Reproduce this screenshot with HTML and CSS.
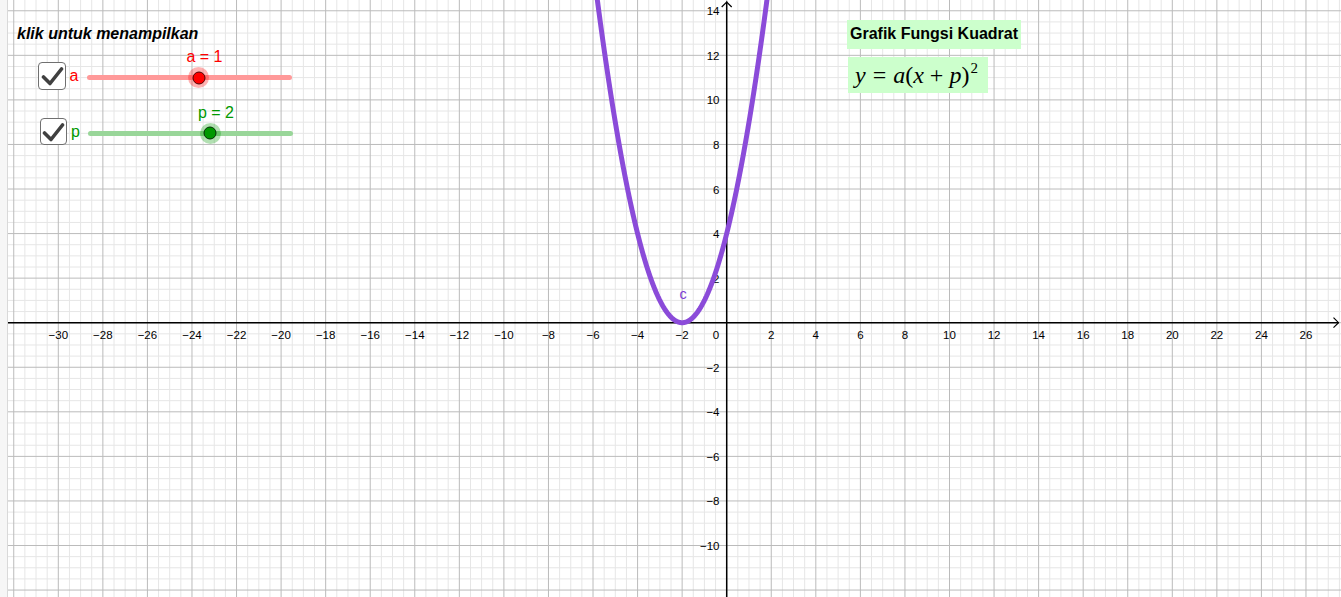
FILE: index.html
```html
<!DOCTYPE html>
<html lang="id">
<head>
<meta charset="utf-8">
<title>Grafik Fungsi Kuadrat</title>
<link rel="stylesheet" href="styles.css">
</head>
<body>
<div class="applet">
  <svg class="graph" id="graph" width="1341" height="597" viewBox="0 0 1341 597" xmlns="http://www.w3.org/2000/svg"></svg>

  <div class="caption">klik untuk menampilkan</div>

  <div class="slider slider-a">
    <div class="check"><svg width="24" height="24" viewBox="0 0 24 24"><path d="M3.5 13 L10 19.5 L21.5 5"/></svg></div>
    <span class="var">a</span>
    <div class="track">
      <span class="value" style="left:118px">a = 1</span>
      <span class="knob" style="left:112px"></span>
    </div>
  </div>

  <div class="slider slider-p">
    <div class="check"><svg width="24" height="24" viewBox="0 0 24 24"><path d="M3.5 13 L10 19.5 L21.5 5"/></svg></div>
    <span class="var">p</span>
    <div class="track">
      <span class="value" style="left:128px">p = 2</span>
      <span class="knob" style="left:122px"></span>
    </div>
  </div>

  <div class="title-box">Grafik Fungsi Kuadrat</div>

  <div class="formula-box">
    <span class="mi">y</span><span class="rel">=</span><span class="mi">a</span><span class="mo">(</span><span class="mi">x</span><span class="bin">+</span><span class="mi">p</span><span class="mo">)</span><sup class="sup">2</sup>
  </div>
</div>
<script src="script.js"></script>
</body>
</html>
```

FILE: styles.css
```css
* { box-sizing: border-box; }

body {
  margin: 0;
  background: #ffffff;
  font-family: "Liberation Sans", Arial, sans-serif;
}

.applet {
  position: relative;
  width: 1341px;
  height: 597px;
  overflow: hidden;
  background: #ffffff;
}

.graph {
  position: absolute;
  left: 0;
  top: 0;
  display: block;
}

.graph .axis-label {
  font-family: "Liberation Sans", Arial, sans-serif;
  font-size: 11.5px;
  fill: #000;
}

.graph .curve-label {
  font-family: "Liberation Sans", Arial, sans-serif;
  font-size: 14.5px;
  fill: #7e3fd6;
}

.caption {
  position: absolute;
  left: 17px;
  top: 24px;
  font-style: italic;
  font-weight: bold;
  font-size: 16px;
  line-height: 20px;
  color: #000;
}

.slider {
  position: absolute;
  display: flex;
  align-items: center;
  height: 28px;
}

.slider-a { left: 38px; top: 62px; }
.slider-p { left: 39.5px; top: 117.5px; }

.check {
  width: 27.5px;
  height: 27.5px;
  border: 1.5px solid #707070;
  border-radius: 4px;
  background: #fff;
  display: flex;
  align-items: center;
  justify-content: center;
}

.check svg path {
  fill: none;
  stroke: #404040;
  stroke-width: 3.6;
  stroke-linecap: round;
  stroke-linejoin: round;
}

.var {
  width: 21px;
  padding-left: 4px;
  font-size: 16px;
  line-height: 20px;
}

.slider-a .var { color: #ff0000; }
.slider-p .var { color: #009900; }

.track {
  position: relative;
  width: 205px;
  height: 5px;
  margin-top: 3px;
  border-radius: 3px;
}

.slider-a .track { background: #ff9999; }
.slider-p .track { background: #99d699; }

.knob {
  position: absolute;
  top: 50%;
  width: 13px;
  height: 13px;
  border-radius: 50%;
  border: 1px solid #000;
  transform: translate(-50%, -50%);
}

.knob::before {
  content: "";
  position: absolute;
  left: 50%;
  top: 50%;
  width: 21px;
  height: 21px;
  border-radius: 50%;
  transform: translate(-50%, -50%);
  z-index: -1;
}

.slider-a .knob { background: #ff0000; }
.slider-a .knob::before { background: rgba(255, 0, 0, 0.3); }
.slider-p .knob { background: #009900; }
.slider-p .knob::before { background: rgba(0, 153, 0, 0.3); }

.value {
  position: absolute;
  top: -27px;
  transform: translateX(-50%);
  font-size: 16px;
  line-height: 18px;
  white-space: nowrap;
}

.slider-a .value { color: #ff0000; }
.slider-p .value { color: #009900; }

.title-box {
  position: absolute;
  left: 847px;
  top: 20px;
  width: 174px;
  height: 29px;
  padding-left: 3px;
  background: #ccffcc;
  font-weight: bold;
  font-size: 16px;
  line-height: 27px;
  color: #000;
  white-space: nowrap;
}

.formula-box {
  position: absolute;
  left: 848px;
  top: 57px;
  width: 140px;
  height: 36px;
  padding-left: 7px;
  background: #ccffcc;
  font-family: "Liberation Serif", "Times New Roman", serif;
  font-size: 24px;
  line-height: 36px;
  color: #000;
  white-space: nowrap;
}

.formula-box .mi { font-style: italic; }
.formula-box .rel { margin: 0 7px; }
.formula-box .bin { margin: 0 6px; }
.formula-box .sup {
  font-size: 15px;
  vertical-align: 10px;
  line-height: 0;
  margin-left: 1px;
}
```

FILE: script.js
```js
(function () {
  var NS = "http://www.w3.org/2000/svg";
  var svg = document.getElementById("graph");
  var W = 1341, H = 597;
  var x0 = 726.7, y0 = 322.7, u = 22.28;
  var L = 8;

  function el(tag, attrs, parent) {
    var e = document.createElementNS(NS, tag);
    for (var k in attrs) e.setAttribute(k, attrs[k]);
    (parent || svg).appendChild(e);
    return e;
  }

  // left frame strip
  el("rect", { x: 0, y: 0, width: 7, height: H, fill: "#f6f6f6" });
  el("line", { x1: 7.5, y1: 0, x2: 7.5, y2: H, stroke: "#d9d9d9", "stroke-width": 1 });

  var minor = el("g", { stroke: "#e6e6e6", "stroke-width": 1 });
  var major = el("g", { stroke: "#bbbbbb", "stroke-width": 1 });
  var step = u / 2;

  var kx0 = Math.ceil((L - x0) / step), kx1 = Math.floor((W - x0) / step);
  for (var k = kx0; k <= kx1; k++) {
    var x = x0 + k * step;
    el("line", { x1: x, y1: 0, x2: x, y2: H }, (k % 4 === 0) ? major : minor);
  }
  var ky0 = Math.ceil((0 - y0) / step), ky1 = Math.floor((H - y0) / step);
  for (var j = ky0; j <= ky1; j++) {
    var y = y0 + j * step;
    el("line", { x1: L, y1: y, x2: W, y2: y }, (j % 4 === 0) ? major : minor);
  }

  // axes
  var axes = el("g", { stroke: "#000", "stroke-width": 1.5, fill: "none" });
  el("line", { x1: L, y1: y0, x2: 1338.5, y2: y0 }, axes);
  el("line", { x1: x0, y1: 1.5, x2: x0, y2: H }, axes);
  el("polyline", { points: "1333.5,317.7 1338.5,322.7 1333.5,327.7", "stroke-width": 1.2 }, axes);
  el("polyline", { points: (x0 - 5) + ",7 " + x0 + ",2 " + (x0 + 5) + ",7", "stroke-width": 1.2 }, axes);

  // labels
  var labels = el("g", {});
  function fmt(n) { return n < 0 ? "\u2212" + (-n) : String(n); }
  for (var n = -30; n <= 26; n += 2) {
    if (n === 0) continue;
    var t = el("text", { x: x0 + n * u, y: 338.5, "text-anchor": "middle", "class": "axis-label" }, labels);
    t.textContent = fmt(n);
  }
  var zero = el("text", { x: 716, y: 338.5, "text-anchor": "middle", "class": "axis-label" }, labels);
  zero.textContent = "0";
  for (var m = -10; m <= 14; m += 2) {
    if (m === 0) continue;
    var ty = el("text", { x: 719.5, y: y0 - m * u + 4.5, "text-anchor": "end", "class": "axis-label" }, labels);
    ty.textContent = fmt(m);
  }

  // curve y = a(x + p)^2, a = 1, p = 2
  var a = 1, p = 2;
  var d = "";
  var first = true;
  for (var xv = -6.2; xv <= 2.2; xv += 0.01) {
    var yv = a * (xv + p) * (xv + p);
    var px = x0 + xv * u, py = y0 - yv * u;
    if (py < -10) { first = true; continue; }
    d += (first ? "M" : "L") + px.toFixed(2) + " " + py.toFixed(2) + " ";
    first = false;
  }
  el("path", { d: d, fill: "none", stroke: "#8b4bd9", "stroke-width": 5, "stroke-linecap": "round", "stroke-linejoin": "round" });

  var c = el("text", { x: 679.5, y: 299, "class": "curve-label" });
  c.textContent = "c";
})();
```
